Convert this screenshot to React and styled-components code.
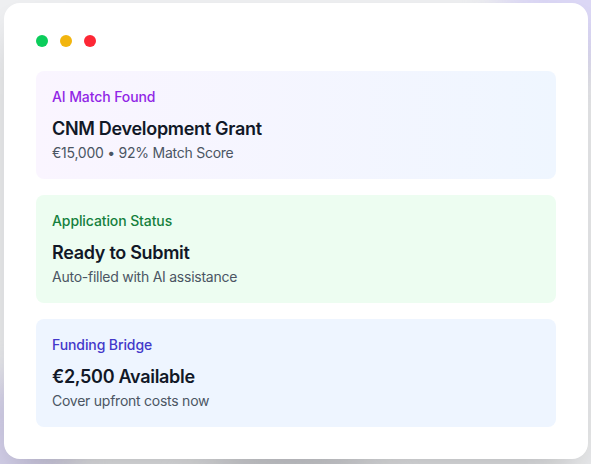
import React from "react";
import styled, { createGlobalStyle } from "styled-components";

const Global = createGlobalStyle`
  html, body { margin: 0; padding: 0; }
  body {
    font-family: Inter, "Noto Sans", "Liberation Sans", sans-serif;
    -webkit-font-smoothing: antialiased;
    background: #f1f2f4;
  }
`;

const Stage = styled.div`
  position: relative;
  width: 591px;
  height: 464px;
  overflow: hidden;
  background: #eff0f2;
  box-sizing: border-box;
  padding: 3px 3px 0 4px;
`;

const Blob = styled.div`
  position: absolute;
  border-radius: 50%;
  filter: blur(18px);
  background: ${(p) => p.$color};
  width: ${(p) => p.$size}px;
  height: ${(p) => p.$size}px;
  left: ${(p) => p.$x}px;
  top: ${(p) => p.$y}px;
`;

const Window = styled.div`
  position: relative;
  box-sizing: border-box;
  width: 584px;
  height: 456px;
  background: #ffffff;
  border-radius: 16px;
  padding: 32px;
  box-shadow: 0 25px 50px -12px rgba(0, 0, 0, 0.25);
  display: flex;
  flex-direction: column;
`;

const Dots = styled.div`
  display: flex;
  gap: 12px;
  margin-bottom: 24px;
`;

const Dot = styled.span`
  width: 12px;
  height: 12px;
  border-radius: 50%;
  background: ${(p) => p.$color};
`;

const Stack = styled.div`
  display: flex;
  flex-direction: column;
  gap: 16px;
`;

const Panel = styled.div`
  border-radius: 8px;
  padding: 16px;
  background: ${(p) => p.$bg};
`;

const Label = styled.div`
  font-size: 14px;
  line-height: 20px;
  font-weight: 500;
  letter-spacing: -0.1px;
  color: ${(p) => p.$color};
  margin-bottom: 8px;
`;

const Title = styled.div`
  font-size: 18px;
  line-height: 28px;
  font-weight: 600;
  letter-spacing: -0.3px;
  color: #111827;
`;

const Sub = styled.div`
  font-size: 14px;
  line-height: 20px;
  letter-spacing: -0.25px;
  color: #4b5563;
`;

const panels = [
  {
    label: "AI Match Found",
    color: "#9126e6",
    bg: "linear-gradient(to right, #faf5ff, #eff6ff)",
    title: "CNM Development Grant",
    sub: "€15,000 • 92% Match Score",
  },
  {
    label: "Application Status",
    color: "#15803d",
    bg: "#edfdf1",
    title: "Ready to Submit",
    sub: "Auto-filled with AI assistance",
  },
  {
    label: "Funding Bridge",
    color: "#4338ca",
    bg: "#eef5ff",
    title: "€2,500 Available",
    sub: "Cover upfront costs now",
  },
];

export default function App() {
  return (
    <>
      <Global />
      <Stage>
        <Blob $color="#dcd8f6" $size={160} $x={500} $y={-90} />
        <Blob $color="#d6d2ec" $size={150} $x={-80} $y={380} />
        <Blob $color="#d2d3d8" $size={220} $x={180} $y={440} />
        <Window>
          <Dots>
            <Dot $color="#0bcd5b" />
            <Dot $color="#f2b50e" />
            <Dot $color="#fd2735" />
          </Dots>
          <Stack>
            {panels.map((p) => (
              <Panel key={p.label} $bg={p.bg}>
                <Label $color={p.color}>{p.label}</Label>
                <Title>{p.title}</Title>
                <Sub>{p.sub}</Sub>
              </Panel>
            ))}
          </Stack>
        </Window>
      </Stage>
    </>
  );
}
